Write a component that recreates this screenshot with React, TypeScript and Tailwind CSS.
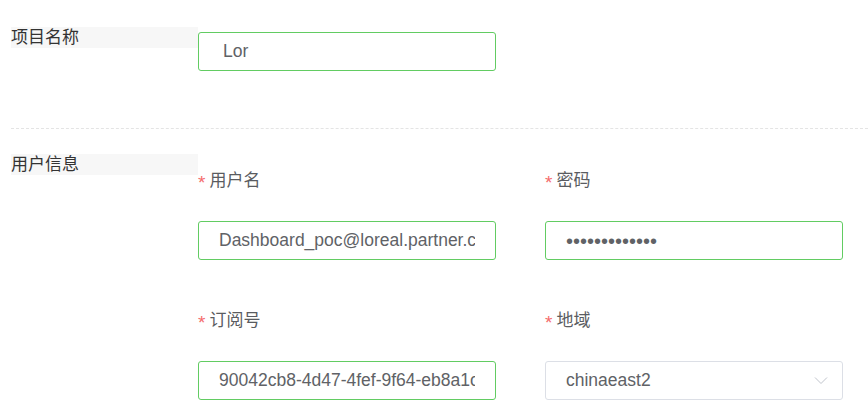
import React from 'react';

const font = "font-['Helvetica_Neue','Liberation_Sans','Noto_Sans_CJK_SC',sans-serif]";

const SectionLabel: React.FC<{ text: string }> = ({ text }) => (
  <div className="w-[187px] h-[21px] shrink-0 bg-[#f7f7f7] text-[17px] leading-[21px] text-[#333333]">
    {text}
  </div>
);

const FieldLabel: React.FC<{ text: string }> = ({ text }) => (
  <div className="h-[20px] mt-[2px] flex items-center text-[17px] leading-[20px] text-[#5a5c61]">
    <span className="text-[#f56c6c] text-[19px] mr-[4px] mt-[3px]">*</span>
    {text}
  </div>
);

const TextBox: React.FC<{ value: string; pad?: string }> = ({ value, pad = 'px-[20px]' }) => (
  <input
    readOnly
    defaultValue={value}
    className={`w-[298px] h-[39px] ${pad} border border-[#62cc62] rounded-[3px] bg-white text-[17.5px] text-[#606266] outline-none ${font}`}
  />
);

const App: React.FC = () => {
  return (
    <div className={`w-[868px] h-[417px] bg-white overflow-hidden pl-[11px] ${font}`}>
      <div className="flex pt-[27px]">
        <SectionLabel text="项目名称" />
        <div className="mt-[5px]">
          <TextBox value="Lor" pad="px-[24px]" />
        </div>
      </div>

      <div className="mt-[57px] border-t border-dashed border-[#e4e4e4]" />

      <div className="flex pt-[25px]">
        <SectionLabel text="用户信息" />
        <div className="mt-[15px] grid grid-cols-[298px_298px] gap-x-[49px] gap-y-[49px]">
          <div>
            <FieldLabel text="用户名" />
            <div className="mt-[30px]">
              <TextBox value="Dashboard_poc@loreal.partner.com" />
            </div>
          </div>
          <div>
            <FieldLabel text="密码" />
            <div className="mt-[30px] w-[298px] h-[39px] px-[20px] border border-[#62cc62] rounded-[3px] flex items-center">
              <span className="text-[20px] leading-none text-[#606266] font-['Liberation_Sans',sans-serif]">•••••••••••••</span>
            </div>
          </div>
          <div>
            <FieldLabel text="订阅号" />
            <div className="mt-[30px]">
              <TextBox value="90042cb8-4d47-4fef-9f64-eb8a1c2d3e4f" />
            </div>
          </div>
          <div>
            <FieldLabel text="地域" />
            <div className="mt-[30px] w-[298px] h-[39px] pl-[20px] pr-[14px] border border-[#dcdfe6] rounded-[3px] flex items-center justify-between">
              <span className="text-[17.5px] text-[#606266]">chinaeast2</span>
              <svg width="14" height="9" viewBox="0 0 14 9" fill="none">
                <polyline points="1,1.5 7,7.5 13,1.5" stroke="#c0c4cc" strokeWidth="1" />
              </svg>
            </div>
          </div>
        </div>
      </div>
    </div>
  );
};

export default App;
